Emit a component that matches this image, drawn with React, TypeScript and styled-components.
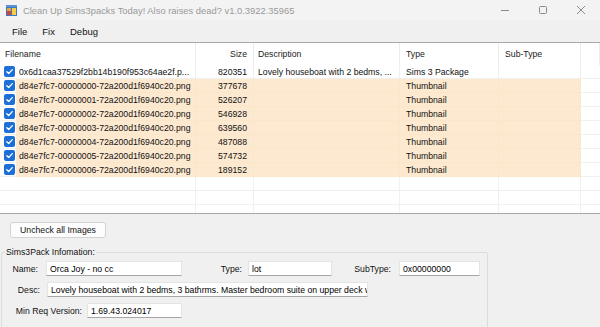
import React from "react";
import styled, { createGlobalStyle } from "styled-components";

const GlobalStyle = createGlobalStyle`
  html, body {
    margin: 0;
    padding: 0;
    background: #f0f0f0;
    font-family: "Liberation Sans", Arial, sans-serif;
  }
  * { box-sizing: border-box; }
`;

const Window = styled.div`
  width: 600px;
  height: 327px;
  overflow: hidden;
  display: flex;
  flex-direction: column;
  background: #f0f0f0;
  color: #000;
`;

const TitleBar = styled.div`
  height: 20px;
  flex: none;
  display: flex;
  align-items: center;
  background: #f3f3f3;
  padding-left: 6px;
`;

const TitleText = styled.div`
  margin-left: 6px;
  font-size: 9.4px;
  color: #9a9a9a;
  white-space: nowrap;
`;

const Controls = styled.div`
  margin-left: auto;
  display: flex;
  height: 100%;
`;

const ControlButton = styled.div`
  width: 38px;
  height: 100%;
  display: flex;
  align-items: center;
  justify-content: center;
  color: #8a8a8a;
`;

const MenuBar = styled.div`
  height: 22px;
  flex: none;
  display: flex;
  align-items: center;
  gap: 15px;
  padding-left: 12px;
  background: #f0f0f0;
`;

const MenuItem = styled.div`
  font-size: 9.5px;
  color: #111;
`;

const ListView = styled.div`
  height: 172px;
  flex: none;
  background: #fff;
  border-top: 1px solid #a8a8a8;
  border-bottom: 1px solid #a8a8a8;
  overflow: hidden;
`;

const COLS = "16px 180px 58px 146px 99px 82px 1fr";

const HeaderRow = styled.div`
  display: grid;
  grid-template-columns: 196px 58px 146px 99px 82px 1fr;
  height: 22px;
  font-size: 8.7px;
  color: #222;
`;

const HeaderCell = styled.div<{ $right?: boolean; $pl?: number }>`
  display: flex;
  align-items: center;
  justify-content: ${(p) => (p.$right ? "flex-end" : "flex-start")};
  padding-left: ${(p) => p.$pl ?? 5}px;
  padding-right: ${(p) => (p.$right ? 6 : 0)}px;
  border-right: 1px solid #ececec;
  white-space: nowrap;
`;

const Row = styled.div`
  display: grid;
  grid-template-columns: ${COLS};
  height: 14px;
  font-size: 8.7px;
  color: #111;
`;

const Cell = styled.div<{ $hl?: boolean; $right?: boolean; $pl?: number; $line?: boolean }>`
  display: flex;
  align-items: center;
  justify-content: ${(p) => (p.$right ? "flex-end" : "flex-start")};
  padding-left: ${(p) => p.$pl ?? 5}px;
  padding-right: ${(p) => (p.$right ? 6 : 0)}px;
  background: ${(p) => (p.$hl ? "#fde9d0" : "transparent")};
  border-bottom: 1px solid ${(p) => (p.$hl ? "#fce6ca" : "#f0f0f0")};
  border-right: 1px solid ${(p) => (p.$line ? (p.$hl ? "#fce6ca" : "#f0f0f0") : "transparent")};
  white-space: nowrap;
  overflow: hidden;
`;

const CheckCell = styled.div`
  display: flex;
  align-items: center;
  padding-left: 4px;
  border-bottom: 1px solid #f0f0f0;
`;

const CheckBox = styled.div`
  width: 11px;
  height: 11px;
  border-radius: 2px;
  background: #1c6fd6;
  display: flex;
  align-items: center;
  justify-content: center;
`;

const Panel = styled.div`
  flex: 1;
  display: flex;
  flex-direction: column;
  align-items: flex-start;
  padding-top: 8px;
`;

const Button = styled.div`
  margin-left: 10px;
  width: 96px;
  height: 16px;
  display: flex;
  align-items: center;
  justify-content: center;
  font-size: 8.7px;
  color: #111;
  background: #fdfdfd;
  border: 1px solid #d3d3d3;
  border-radius: 3px;
`;

const GroupBox = styled.fieldset`
  margin: 9px 0 0 1px;
  padding: 0 0 20px 0;
  width: 487px;
  border: 1px solid #dcdcdc;
  border-radius: 2px;
  display: flex;
  flex-direction: column;
  gap: 6px;
`;

const Legend = styled.legend`
  font-size: 8.7px;
  line-height: 10px;
  color: #111;
  padding: 0 1px;
  margin-left: 3px;
`;

const FieldRow = styled.div<{ $mt?: number }>`
  display: flex;
  align-items: center;
  height: 15px;
  margin-top: ${(p) => p.$mt ?? 0}px;
`;

const Label = styled.div<{ $w: number }>`
  width: ${(p) => p.$w}px;
  text-align: right;
  font-size: 8.7px;
  color: #111;
  white-space: nowrap;
  flex: none;
`;

const TextBox = styled.input<{ $w: number; $ml: number }>`
  width: ${(p) => p.$w}px;
  margin-left: ${(p) => p.$ml}px;
  height: 15px;
  flex: none;
  padding: 0 0 0 3px;
  font-family: "Liberation Sans", Arial, sans-serif;
  font-size: 8.7px;
  color: #000;
  background: #fff;
  border: 1px solid #e4e4e4;
  border-bottom-color: #a6a6a6;
  border-radius: 1px;
  outline: none;
`;

const AppIcon = () => (
  <svg width="11" height="11" viewBox="0 0 11 11">
    <rect x="0" y="0" width="11" height="11" fill="#3a78c9" />
    <rect x="0" y="0" width="11" height="2" fill="#5b93d8" />
    <rect x="1" y="3" width="4" height="3" fill="#e8a23a" />
    <rect x="1" y="6" width="4" height="4" fill="#d8452f" />
    <rect x="6" y="3" width="4" height="7" fill="#f3cf4a" />
  </svg>
);

const Check = () => (
  <svg width="9" height="9" viewBox="0 0 9 9">
    <path d="M1.8 4.7 L3.7 6.5 L7.3 2.6" fill="none" stroke="#fff" strokeWidth="1.3" strokeLinecap="round" strokeLinejoin="round" />
  </svg>
);

type Item = { name: string; size: string; desc: string; type: string; hl: boolean };

const items: Item[] = [
  { name: "0x6d1caa37529f2bb14b190f953c64ae2f.p...", size: "820351", desc: "Lovely houseboat with 2 bedms, ...", type: "Sims 3 Package", hl: false },
  { name: "d84e7fc7-00000000-72a200d1f6940c20.png", size: "377678", desc: "", type: "Thumbnail", hl: true },
  { name: "d84e7fc7-00000001-72a200d1f6940c20.png", size: "526207", desc: "", type: "Thumbnail", hl: true },
  { name: "d84e7fc7-00000002-72a200d1f6940c20.png", size: "546928", desc: "", type: "Thumbnail", hl: true },
  { name: "d84e7fc7-00000003-72a200d1f6940c20.png", size: "639560", desc: "", type: "Thumbnail", hl: true },
  { name: "d84e7fc7-00000004-72a200d1f6940c20.png", size: "487088", desc: "", type: "Thumbnail", hl: true },
  { name: "d84e7fc7-00000005-72a200d1f6940c20.png", size: "574732", desc: "", type: "Thumbnail", hl: true },
  { name: "d84e7fc7-00000006-72a200d1f6940c20.png", size: "189152", desc: "", type: "Thumbnail", hl: true },
];

export default function App() {
  return (
    <>
      <GlobalStyle />
      <Window>
        <TitleBar>
          <AppIcon />
          <TitleText>Clean Up Sims3packs Today! Also raises dead? v1.0.3922.35965</TitleText>
          <Controls>
            <ControlButton>
              <svg width="10" height="10" viewBox="0 0 10 10">
                <line x1="1" y1="5.5" x2="9" y2="5.5" stroke="currentColor" strokeWidth="1" />
              </svg>
            </ControlButton>
            <ControlButton>
              <svg width="10" height="10" viewBox="0 0 10 10">
                <rect x="1.5" y="1.5" width="7" height="7" rx="1" fill="none" stroke="currentColor" strokeWidth="1" />
              </svg>
            </ControlButton>
            <ControlButton>
              <svg width="10" height="10" viewBox="0 0 10 10">
                <path d="M1 1 L9 9 M9 1 L1 9" stroke="currentColor" strokeWidth="1" />
              </svg>
            </ControlButton>
          </Controls>
        </TitleBar>
        <MenuBar>
          <MenuItem>File</MenuItem>
          <MenuItem>Fix</MenuItem>
          <MenuItem>Debug</MenuItem>
        </MenuBar>
        <ListView>
          <HeaderRow>
            <HeaderCell>Filename</HeaderCell>
            <HeaderCell $right>Size</HeaderCell>
            <HeaderCell $pl={4}>Description</HeaderCell>
            <HeaderCell $pl={6}>Type</HeaderCell>
            <HeaderCell $pl={6}>Sub-Type</HeaderCell>
            <HeaderCell />
          </HeaderRow>
          {items.map((it, i) => (
            <Row key={i}>
              <CheckCell>
                <CheckBox>
                  <Check />
                </CheckBox>
              </CheckCell>
              <Cell $hl={it.hl} $pl={3} $line>{it.name}</Cell>
              <Cell $hl={it.hl} $right $line>{it.size}</Cell>
              <Cell $hl={it.hl} $pl={4} $line>{it.desc}</Cell>
              <Cell $hl={it.hl} $pl={6} $line>{it.type}</Cell>
              <Cell $hl={it.hl} $line />
              <Cell />
            </Row>
          ))}
          {[0, 1, 2].map((i) => (
            <Row key={`e${i}`}>
              <CheckCell />
              <Cell $line />
              <Cell $line />
              <Cell $line />
              <Cell $line />
              <Cell $line />
              <Cell />
            </Row>
          ))}
        </ListView>
        <Panel>
          <Button>Uncheck all Images</Button>
          <GroupBox>
            <Legend>Sims3Pack Infomation:</Legend>
            <FieldRow $mt={4}>
              <Label $w={36}>Name:</Label>
              <TextBox $w={136} $ml={8} readOnly value="Orca Joy - no cc" />
              <Label $w={60}>Type:</Label>
              <TextBox $w={84} $ml={6} readOnly value="lot" />
              <Label $w={59}>SubType:</Label>
              <TextBox $w={81} $ml={8} readOnly value="0x00000000" />
            </FieldRow>
            <FieldRow>
              <Label $w={38}>Desc:</Label>
              <TextBox
                $w={321}
                $ml={7}
                readOnly
                value="Lovely houseboat with 2 bedms, 3 bathrms. Master bedroom suite on upper deck with balcony."
              />
            </FieldRow>
            <FieldRow>
              <Label $w={80}>Min Req Version:</Label>
              <TextBox $w={95} $ml={5} readOnly value="1.69.43.024017" />
            </FieldRow>
          </GroupBox>
        </Panel>
      </Window>
    </>
  );
}
